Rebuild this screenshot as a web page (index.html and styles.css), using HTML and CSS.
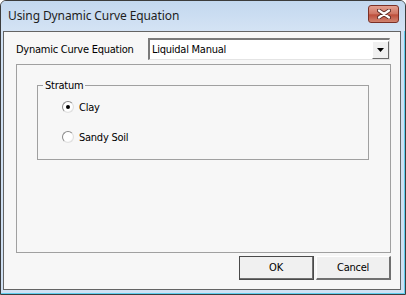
FILE: index.html
```html
<!DOCTYPE html>
<html lang="en">
<head>
    <meta charset="UTF-8">
    <title>Using Dynamic Curve Equation</title>
    <link rel="stylesheet" href="styles.css">
</head>
<body>
    <div class="window">
        <div class="titlebar">
            <span class="title">Using Dynamic Curve Equation</span>
            <button class="close" aria-label="Close">
                <svg width="14" height="10" viewBox="0 0 14 10">
                    <path d="M2 1.5 L12 8.5 M12 1.5 L2 8.5" stroke="#5a2a24" stroke-width="4" stroke-linecap="round"/>
                    <path d="M2 1.5 L12 8.5 M12 1.5 L2 8.5" stroke="#ffffff" stroke-width="2.2" stroke-linecap="round"/>
                </svg>
            </button>
        </div>

        <div class="client">
            <div class="row">
                <label class="field-label">Dynamic Curve Equation</label>
                <div class="combo">
                    <span class="combo-text">Liquidal Manual</span>
                    <span class="combo-btn">
                        <svg width="7" height="4" viewBox="0 0 7 4"><path d="M0 0 H7 L3.5 4 Z" fill="#000"/></svg>
                    </span>
                </div>
            </div>

            <div class="panel">
                <fieldset class="group">
                    <legend>Stratum</legend>
                    <div class="radio-row">
                        <span class="radio checked"></span>
                        <span>Clay</span>
                    </div>
                    <div class="radio-row">
                        <span class="radio"></span>
                        <span>Sandy Soil</span>
                    </div>
                </fieldset>
            </div>

            <div class="buttons">
                <button class="btn default">OK</button>
                <button class="btn">Cancel</button>
            </div>
        </div>
    </div>
</body>
</html>
```

FILE: styles.css
```css
body {
    margin: 0;
    background: #ffffff;
    font-family: "DejaVu Sans Condensed", "Liberation Sans", sans-serif;
    font-size: 11px;
    letter-spacing: -0.25px;
    color: #000;
}
.window {
    width: 406px;
    height: 295px;
    box-sizing: border-box;
    border: 1px solid #3c3c3c;
    border-radius: 6px 6px 0 0;
    background: #cfe0f3;
    box-shadow: inset -1px -1px 0 #5fcdee;
    padding: 0 4px 4px 2px;
    display: flex;
    flex-direction: column;
}
.titlebar {
    height: 30px;
    flex: none;
    display: flex;
    align-items: center;
    justify-content: space-between;
    background: linear-gradient(#c3d8ef, #d4e3f4);
    margin: 0 -4px 0 -2px;
    padding: 0 6px 0 7px;
    border-radius: 5px 5px 0 0;
}
.title {
    font-family: "Noto Sans", sans-serif;
    font-size: 12px;
    letter-spacing: -0.1px;
    color: #1e1e1e;
    padding-bottom: 2px;
}
.close {
    width: 31px;
    height: 18px;
    margin-bottom: 5px;
    border: 1px solid #7b3026;
    border-radius: 3px;
    background: linear-gradient(#e3a091, #cf7462 50%, #bd4e3b 55%, #d18470);
    padding: 0;
    display: flex;
    align-items: center;
    justify-content: center;
}
.client {
    flex: 1;
    border: 1px solid #646464;
    background: #f7f7f7;
    display: flex;
    flex-direction: column;
    padding: 6px 9px 9px 12px;
}
.row {
    display: flex;
    align-items: center;
    height: 22px;
}
.field-label {
    width: 132px;
    flex: none;
}
.combo {
    flex: 1;
    height: 22px;
    box-sizing: border-box;
    margin-right: 1px;
    background: #fff;
    border-top: 2px solid #7a7a7a;
    border-left: 2px solid #7a7a7a;
    border-bottom: 1px solid #e4e4e4;
    border-right: 1px solid #e4e4e4;
    display: flex;
    align-items: center;
    justify-content: space-between;
    padding-left: 2px;
}
.combo-btn {
    width: 17px;
    height: 18px;
    box-sizing: border-box;
    background: #f0f0f0;
    border-top: 1px solid #fff;
    border-left: 1px solid #fff;
    border-right: 1px solid #6a6a6a;
    border-bottom: 1px solid #6a6a6a;
    display: flex;
    align-items: center;
    justify-content: center;
}
.panel {
    margin-top: 4px;
    flex: 1;
    border: 1px solid #a0a0a0;
    padding: 14px 0 0 20px;
}
.group {
    width: 332px;
    height: 81px;
    box-sizing: border-box;
    margin: 0;
    border: 1px solid #a0a0a0;
    padding: 8px 0 0 5px;
}
.group legend {
    padding: 0 2px;
    line-height: 13px;
}
.radio-row {
    display: flex;
    align-items: center;
    gap: 4px;
    height: 14px;
    margin-left: 19px;
    margin-bottom: 16px;
}
.radio {
    width: 12px;
    height: 12px;
    box-sizing: border-box;
    border-radius: 50%;
    border: 1px solid #8a8a8a;
    border-right-color: #e0e0e0;
    border-bottom-color: #e0e0e0;
    background: radial-gradient(circle at 40% 40%, #fff 55%, #e6e6e6);
    display: flex;
    align-items: center;
    justify-content: center;
    margin-right: 1px;
}
.radio.checked::after {
    content: "";
    width: 4px;
    height: 4px;
    border-radius: 50%;
    background: #000;
}
.buttons {
    display: flex;
    justify-content: flex-end;
    gap: 2px;
    margin-top: 3px;
}
.btn {
    width: 75px;
    height: 24px;
    font-family: "DejaVu Sans Condensed", "Liberation Sans", sans-serif;
    font-size: 11px;
    letter-spacing: -0.25px;
    color: #000;
    background: #f0f0f0;
    border-top: 1px solid #fff;
    border-left: 1px solid #fff;
    border-right: 2px solid #707070;
    border-bottom: 2px solid #707070;
    padding: 0;
}
.btn.default {
    outline: 1px solid #4a4a4a;
    outline-offset: -1px;
    border-top-color: #8a8a8a;
    border-left-color: #8a8a8a;
}
```
